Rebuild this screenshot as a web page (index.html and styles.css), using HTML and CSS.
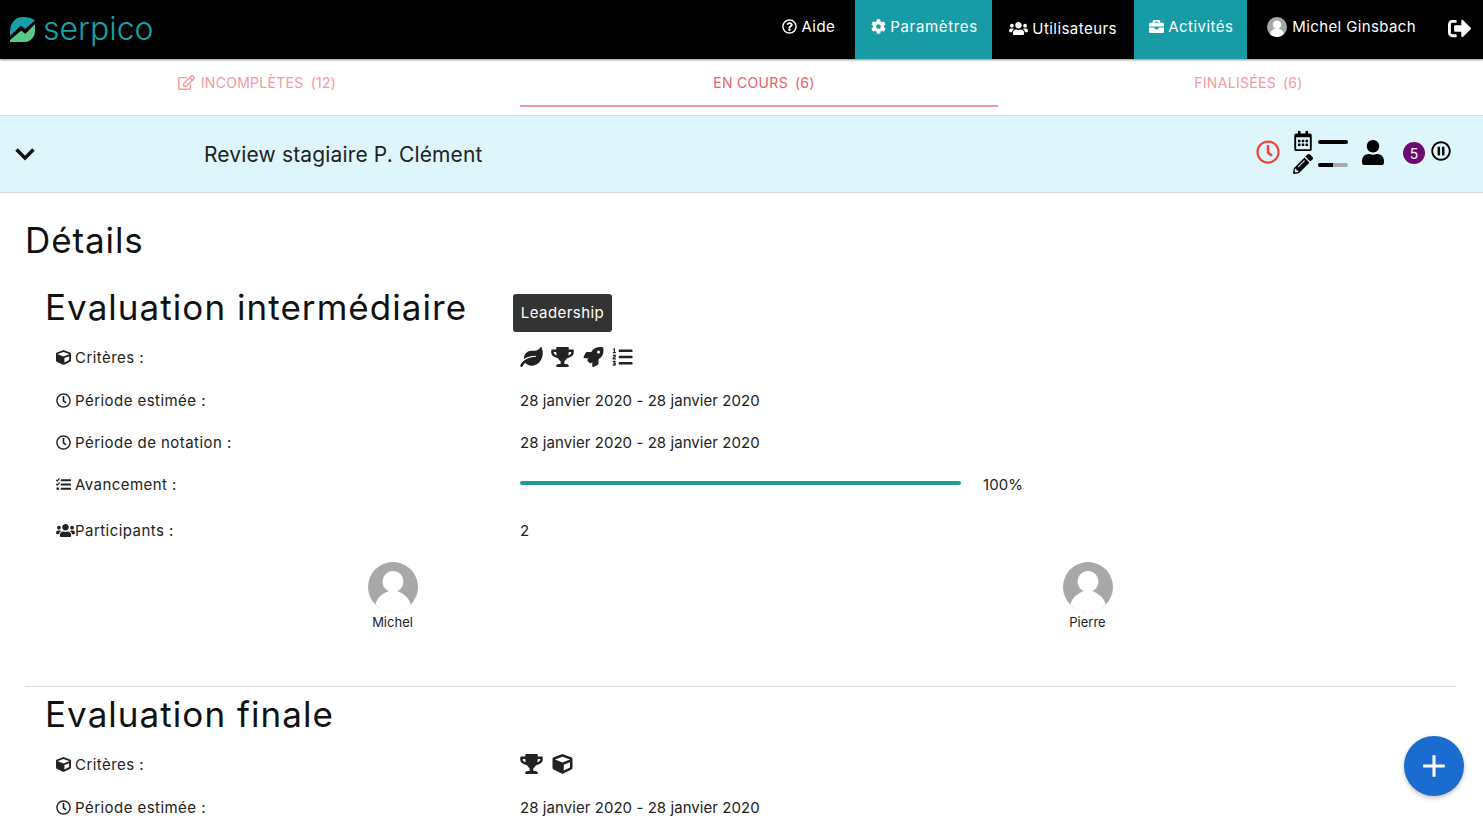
FILE: index.html
```html
<!DOCTYPE html>
<html lang="fr">
<head>
<meta charset="utf-8">
<title>Serpico</title>
<link rel="stylesheet" href="styles.css">
</head>
<body>
<svg class="sprite" xmlns="http://www.w3.org/2000/svg">
<defs>
<symbol id="i-user" viewBox="0 0 448 512"><path d="M224 256c70.7 0 128-57.3 128-128S294.7 0 224 0 96 57.3 96 128s57.3 128 128 128zm89.6 32h-16.7c-22.2 10.2-46.9 16-72.9 16s-50.6-5.8-72.9-16h-16.7C60.2 288 0 348.2 0 422.4V464c0 26.5 21.5 48 48 48h352c26.5 0 48-21.5 48-48v-41.6c0-74.2-60.2-134.4-134.4-134.4z"/></symbol>
<symbol id="i-users" viewBox="0 0 640 512"><path d="M96 224c35.3 0 64-28.7 64-64s-28.7-64-64-64-64 28.7-64 64 28.7 64 64 64zm448 0c35.3 0 64-28.7 64-64s-28.7-64-64-64-64 28.7-64 64 28.7 64 64 64zm32 32h-64c-17.6 0-33.5 7.1-45.1 18.6 40.3 22.1 68.9 62 75.1 109.4h66c17.7 0 32-14.3 32-32v-32c0-35.3-28.7-64-64-64zm-256 0c61.9 0 112-50.1 112-112S381.9 32 320 32 208 82.1 208 144s50.1 112 112 112zm76.8 32h-8.3c-20.8 10-43.9 16-68.5 16s-47.6-6-68.5-16h-8.3C179.6 288 128 339.6 128 403.2V432c0 26.5 21.5 48 48 48h288c26.5 0 48-21.5 48-48v-28.8c0-63.6-51.6-115.2-115.2-115.2zm-223.7-13.4C161.5 263.1 145.6 256 128 256H64c-35.3 0-64 28.7-64 64v32c0 17.7 14.3 32 32 32h65.9c6.3-47.4 34.9-87.3 75.2-109.4z"/></symbol>
<symbol id="i-trophy" viewBox="0 0 576 512"><path d="M552 64H448V24c0-13.3-10.7-24-24-24H152c-13.3 0-24 10.7-24 24v40H24C10.7 64 0 74.7 0 88v56c0 35.7 22.5 72.4 61.9 100.7 31.5 22.7 69.8 37.1 110 41.7C203.3 338.5 240 360 240 360v72h-48c-35.3 0-64 20.7-64 56v12c0 6.6 5.4 12 12 12h296c6.6 0 12-5.4 12-12v-12c0-35.3-28.7-56-64-56h-48v-72s36.7-21.5 68.1-73.6c40.3-4.6 78.6-19 110-41.7 39.3-28.3 61.9-65 61.9-100.7V88c0-13.3-10.7-24-24-24zM99.3 192.8C74.9 175.2 64 155.6 64 144v-16h64.2c1 32.6 5.8 61.2 12.8 86.2-15.1-5.2-29.2-12.4-41.7-21.4zM512 144c0 16.1-17.7 36.1-35.3 48.8-12.5 9-26.7 16.2-41.8 21.4 7-25 11.8-53.6 12.8-86.2H512v16z"/></symbol>
<symbol id="i-cube" viewBox="0 0 512 512"><path d="M239.1 6.3l-208 78c-18.7 7-31.1 25-31.1 45v225.1c0 18.2 10.3 34.8 26.5 42.9l208 104c13.5 6.8 29.4 6.8 42.9 0l208-104c16.3-8.1 26.5-24.8 26.5-42.9V129.3c0-20-12.4-37.9-31.1-44.9l-208-78C262 2.2 250 2.2 239.1 6.3zM256 68.4l192 72v1.1l-192 78-192-78v-1.1l192-72zm32 356V275.5l160-65v133.9l-160 80z"/></symbol>
<symbol id="i-clock" viewBox="0 0 512 512"><path d="M256 8C119 8 8 119 8 256s111 248 248 248 248-111 248-248S393 8 256 8zm0 448c-110.500 0-200-89.500-200-200S145.500 56 256 56s200 89.500 200 200-89.500 200-200 200zm61.800-104.400l-84.900-61.700c-3.100-2.300-4.900-5.900-4.900-9.700V116c0-6.600 5.400-12 12-12h32c6.600 0 12 5.400 12 12v141.700l66.800 48.600c5.400 3.900 6.500 11.400 2.600 16.800L334.600 349c-3.900 5.300-11.400 6.500-16.800 2.600z"/></symbol>
<symbol id="i-question" viewBox="0 0 512 512"><path d="M256 8C119.043 8 8 119.083 8 256c0 136.997 111.043 248 248 248s248-111.003 248-248C504 119.083 392.957 8 256 8zm0 448c-110.532 0-200-89.431-200-200 0-110.495 89.472-200 200-200 110.491 0 200 89.471 200 200 0 110.530-89.431 200-200 200zm107.244-255.200c0 67.052-72.421 68.084-72.421 92.863V300c0 6.627-5.373 12-12 12h-45.647c-6.627 0-12-5.373-12-12v-8.659c0-35.745 27.100-50.034 47.579-61.516 17.561-9.845 28.324-16.541 28.324-29.579 0-17.246-21.999-28.693-39.784-28.693-23.189 0-33.894 10.977-48.942 29.969-4.057 5.120-11.460 6.071-16.666 2.124l-27.824-21.098c-5.107-3.872-6.251-11.066-2.644-16.363C184.846 131.491 214.940 112 261.794 112c49.071 0 101.450 38.304 101.450 88.800zM298 368c0 23.159-18.841 42-42 42s-42-18.841-42-42 18.841-42 42-42 42 18.841 42 42z"/></symbol>
<symbol id="i-cog" viewBox="0 0 512 512"><path d="M487.400 315.700l-42.600-24.600c4.300-23.200 4.300-47 0-70.200l42.600-24.600c4.900-2.800 7.100-8.600 5.500-14-11.100-35.600-30-67.800-54.700-94.600-3.800-4.100-10-5.100-14.800-2.300L380.800 110c-17.900-15.400-38.500-27.300-60.800-35.100V25.800c0-5.600-3.900-10.500-9.400-11.700-36.700-8.200-74.300-7.800-109.200 0-5.500 1.200-9.400 6.100-9.400 11.700V75c-22.200 7.900-42.800 19.800-60.800 35.100L88.700 85.500c-4.900-2.800-11-1.900-14.800 2.300-24.700 26.700-43.600 58.900-54.700 94.600-1.700 5.400.6 11.200 5.500 14L67.300 221c-4.300 23.200-4.300 47 0 70.200l-42.600 24.600c-4.900 2.800-7.100 8.600-5.500 14 11.100 35.600 30 67.800 54.700 94.600 3.800 4.100 10 5.100 14.800 2.300l42.600-24.600c17.900 15.400 38.500 27.300 60.800 35.100v49.200c0 5.600 3.900 10.500 9.400 11.700 36.700 8.200 74.300 7.800 109.200 0 5.500-1.200 9.400-6.100 9.400-11.700v-49.200c22.200-7.900 42.800-19.800 60.800-35.100l42.600 24.600c4.900 2.800 11 1.900 14.800-2.300 24.700-26.700 43.600-58.900 54.700-94.600 1.500-5.500-.7-11.300-5.600-14.100zM256 336c-44.100 0-80-35.900-80-80s35.900-80 80-80 80 35.900 80 80-35.900 80-80 80z"/></symbol>
<symbol id="i-briefcase" viewBox="0 0 512 512"><path d="M320 336c0 8.840-7.160 16-16 16h-96c-8.840 0-16-7.160-16-16v-48H0v144c0 25.600 22.400 48 48 48h416c25.600 0 48-22.400 48-48V288H320v48zm144-208h-80V80c0-25.600-22.400-48-48-48H176c-25.600 0-48 22.400-48 48v48H48c-25.600 0-48 22.400-48 48v80h512v-80c0-25.600-22.400-48-48-48zm-144 0H192V96h128v32z"/></symbol>
<symbol id="i-signout" viewBox="0 0 512 512"><path d="M180 448H96c-53 0-96-43-96-96V160c0-53 43-96 96-96h84c6.600 0 12 5.400 12 12v40c0 6.600-5.400 12-12 12H96c-17.700 0-32 14.300-32 32v192c0 17.700 14.300 32 32 32h84c6.600 0 12 5.400 12 12v40c0 6.600-5.400 12-12 12z"/><path d="M505 273L337 441c-15 15-41 4.500-41-17v-96H160c-13.300 0-24-10.700-24-24v-96c0-13.300 10.700-24 24-24h136V88c0-21.400 26-32 41-17l168 168c9.300 9.400 9.300 24.600 0 34z"/></symbol>
<symbol id="i-pencil" viewBox="0 0 512 512"><path d="M497.900 142.100l-46.100 46.100c-4.700 4.700-12.300 4.700-17 0l-111-111c-4.700-4.700-4.700-12.300 0-17l46.100-46.100c18.700-18.700 49.100-18.700 67.900 0l60.100 60.100c18.800 18.700 18.800 49.100 0 67.900zM284.200 99.800L21.600 362.400.4 483.900c-2.900 16.400 11.400 30.600 27.800 27.800l121.500-21.300 262.600-262.600c4.700-4.700 4.700-12.300 0-17l-111-111c-4.800-4.700-12.400-4.700-17.100 0zM124.100 339.900c-5.500-5.500-5.500-14.300 0-19.800l154-154c5.500-5.500 14.300-5.500 19.800 0s5.500 14.300 0 19.800l-154 154c-5.500 5.500-14.300 5.500-19.800 0zM88 424h48v36.300l-64.500 11.300-31.100-31.100L51.700 376H88v48z"/></symbol>
<symbol id="i-calendar" viewBox="0 0 448 512"><path d="M148 288h-40c-6.600 0-12-5.400-12-12v-40c0-6.600 5.400-12 12-12h40c6.600 0 12 5.400 12 12v40c0 6.600-5.400 12-12 12zm108-12v-40c0-6.600-5.400-12-12-12h-40c-6.600 0-12 5.400-12 12v40c0 6.600 5.400 12 12 12h40c6.600 0 12-5.400 12-12zm96 0v-40c0-6.600-5.400-12-12-12h-40c-6.600 0-12 5.400-12 12v40c0 6.600 5.400 12 12 12h40c6.600 0 12-5.400 12-12zm-96 96v-40c0-6.600-5.400-12-12-12h-40c-6.600 0-12 5.400-12 12v40c0 6.600 5.400 12 12 12h40c6.600 0 12-5.400 12-12zm-96 0v-40c0-6.600-5.400-12-12-12h-40c-6.600 0-12 5.400-12 12v40c0 6.600 5.400 12 12 12h40c6.600 0 12-5.400 12-12zm192 0v-40c0-6.600-5.400-12-12-12h-40c-6.600 0-12 5.400-12 12v40c0 6.600 5.400 12 12 12h40c6.600 0 12-5.400 12-12zm96-260v352c0 26.500-21.500 48-48 48H48c-26.500 0-48-21.500-48-48V112c0-26.500 21.500-48 48-48h48V12c0-6.600 5.400-12 12-12h40c6.600 0 12 5.400 12 12v52h128V12c0-6.600 5.400-12 12-12h40c6.600 0 12 5.400 12 12v52h48c26.500 0 48 21.500 48 48zm-48 346V160H48v298c0 3.300 2.700 6 6 6h340c3.300 0 6-2.700 6-6z"/></symbol>
<symbol id="i-pause" viewBox="0 0 512 512"><path d="M256 8C119 8 8 119 8 256s111 248 248 248 248-111 248-248S393 8 256 8zm0 448c-110.500 0-200-89.500-200-200S145.500 56 256 56s200 89.500 200 200-89.500 200-200 200zm-40-312h-32c-8.800 0-16 7.200-16 16v192c0 8.800 7.200 16 16 16h32c8.800 0 16-7.200 16-16V160c0-8.800-7.200-16-16-16zm112 0h-32c-8.800 0-16 7.200-16 16v192c0 8.800 7.200 16 16 16h32c8.800 0 16-7.200 16-16V160c0-8.800-7.200-16-16-16z"/></symbol>
<symbol id="i-leaf" viewBox="0 0 576 512"><path d="M546.200 9.700c-5.600-12.500-21.600-13-28.300-1.200C486.900 62.400 431.400 96 368 96h-80C182 96 96 182 96 288c0 7 .8 13.700 1.500 20.500C161.300 262.800 253.400 224 384 224c8.800 0 16 7.200 16 16s-7.200 16-16 16C132.600 256 26 410.100 2.400 468c-6.600 16.300 1.200 34.900 17.500 41.600 16.400 6.800 35-1.100 41.800-17.300 1.500-3.600 20.900-47.900 71.900-90.600 32.400 43.900 94 85.800 174.900 77.200C465.500 467.500 576 326.700 576 154.300c0-50.200-10.800-102.200-29.800-144.600z"/></symbol>
<symbol id="i-rocket" viewBox="0 0 512 512"><path d="M505.120 19.094c-1.189-5.531-6.658-11-12.207-12.188C460.716 0 435.507 0 410.407 0 307.175 0 245.269 55.203 199.052 128H94.838c-16.348.016-35.557 11.875-42.887 26.484L2.516 253.297A28.400 28.400 0 0 0 0 264a24.009 24.009 0 0 0 24.006 24h103.810l-22.475 22.469c-11.365 11.361-12.996 32.258 0 45.250l50.904 50.906c11.156 11.188 32.156 13.156 45.277 0l22.475-22.469V488a24.009 24.009 0 0 0 24.006 24 28.559 28.559 0 0 0 10.707-2.516l98.728-49.391c14.629-7.297 26.508-26.500 26.508-42.859V312.797c72.598-46.313 128.035-108.406 128.035-211.094C512.075 76.500 512.075 51.297 505.120 19.094zM384.040 168A40 40 0 1 1 424.050 128 40.023 40.023 0 0 1 384.040 168z"/></symbol>
<symbol id="i-listol" viewBox="0 0 512 512"><path d="M61.770 401l17.500-20.150a19.920 19.920 0 0 0 5.070-14.190v-3.310C84.340 356 80.500 352 73 352H16a8 8 0 0 0-8 8v16a8 8 0 0 0 8 8h22.830a157.410 157.410 0 0 0-11 12.310l-5.610 7c-4 5.070-5.250 10.130-2.800 14.880l1.050 1.930c3 5.760 6.290 7.880 12.250 7.880h4.730c10.330 0 15.940 2.440 15.940 9.090 0 4.720-4.200 8.220-14.360 8.220a41.540 41.540 0 0 1-15.470-3.120c-6.490-3.880-11.740-3.500-15.600 3.120l-5.590 9.310c-3.720 6.130-3.190 11.720 2.630 15.940 7.710 4.690 20.380 9.440 37 9.440 34.160 0 48.500-22.750 48.500-44.120-.03-14.380-9.120-29.760-28.730-34.880zM496 224H176a16 16 0 0 0-16 16v32a16 16 0 0 0 16 16h320a16 16 0 0 0 16-16v-32a16 16 0 0 0-16-16zm0-160H176a16 16 0 0 0-16 16v32a16 16 0 0 0 16 16h320a16 16 0 0 0 16-16V80a16 16 0 0 0-16-16zm0 320H176a16 16 0 0 0-16 16v32a16 16 0 0 0 16 16h320a16 16 0 0 0 16-16v-32a16 16 0 0 0-16-16zM16 160h64a8 8 0 0 0 8-8v-16a8 8 0 0 0-8-8H64V40a8 8 0 0 0-8-8H32a8 8 0 0 0-7.140 4.420l-8 16A8 8 0 0 0 24 64h8v64H16a8 8 0 0 0-8 8v16a8 8 0 0 0 8 8zm-3.910 160H80a8 8 0 0 0 8-8v-16a8 8 0 0 0-8-8H41.320c3.290-10.290 48.340-18.680 48.340-56.440 0-29.060-25-39.560-44.470-39.560-21.360 0-33.800 10-40.460 18.750-4.370 5.590-3 10.840 2.800 15.370l8.580 6.880c5.610 4.560 11 2.470 16.120-2.440a13.440 13.440 0 0 1 9.460-3.840c3.330 0 9.280 1.560 9.280 8.750C51 248.190 0 257.310 0 304.590v4C0 316 5.080 320 12.090 320z"/></symbol>
<symbol id="i-tasks" viewBox="0 0 512 512"><path d="M176 80h320a16 16 0 0 1 16 16v32a16 16 0 0 1-16 16H176a16 16 0 0 1-16-16V96a16 16 0 0 1 16-16zm0 144h320a16 16 0 0 1 16 16v32a16 16 0 0 1-16 16H176a16 16 0 0 1-16-16v-32a16 16 0 0 1 16-16zm0 144h320a16 16 0 0 1 16 16v32a16 16 0 0 1-16 16H176a16 16 0 0 1-16-16v-32a16 16 0 0 1 16-16z"/><path d="M8 96l36 36 76-88M8 240l36 36 76-88" fill="none" stroke="currentColor" stroke-width="42"/><circle cx="60" cy="400" r="46"/></symbol>
<symbol id="i-edit" viewBox="0 0 576 512"><path d="M402.300 344.900l32-32c5-5 13.700-1.500 13.700 5.700V464c0 26.500-21.500 48-48 48H48c-26.500 0-48-21.500-48-48V112c0-26.500 21.500-48 48-48h273.500c7.100 0 10.700 8.600 5.700 13.700l-32 32c-1.500 1.500-3.500 2.300-5.700 2.300H48v352h352V350.500c0-2.100.8-4.100 2.300-5.600zm156.600-201.800L296.300 405.700l-90.400 10c-26.200 2.900-48.500-19.200-45.600-45.600l10-90.400L432.900 17.100c22.900-22.900 59.900-22.900 82.700 0l43.200 43.200c22.900 22.900 22.900 60 .1 82.800zM460.100 174L402 115.900 216.200 301.800l-7.300 65.300 65.300-7.300L460.100 174zm64.800-79.700l-43.200-43.200c-4.100-4.100-10.800-4.100-14.800 0L436 82l58.100 58.100 30.900-30.900c4-4.200 4-10.800-.1-14.900z"/></symbol>
<symbol id="i-avatar" viewBox="0 0 50 50"><circle cx="25" cy="25" r="25" fill="#a8a8a8"/><circle cx="25" cy="19.500" r="10.500" fill="#fff"/><path d="M7.300 42.700C9 36 14 31.500 21 29h8c7 2.500 12 7 13.700 13.700A25 25 0 0 1 7.300 42.700z" fill="#fff"/></symbol>
</defs>
</svg>

<header class="topbar">
  <div class="brand">
    <svg class="brand-mark" viewBox="0 0 25 25" aria-hidden="true">
      <path class="mark-teal" d="M0 14.500C0 6 5.500 0 13 0c5 0 9 1 12 3.500L15 12l-4-3.500L0 19z"/>
      <path class="mark-green" d="M0 25v-2l11.300-9.500 4 3.500L25 7v7c0 6-4.500 11-10.500 11z"/>
    </svg>
    <span class="brand-name">serpico</span>
  </div>
  <nav class="nav">
    <a class="nav-item nav-aide"><svg class="ico ico-nav"><use href="#i-question"/></svg>Aide</a>
    <a class="nav-item nav-on nav-param"><svg class="ico ico-nav"><use href="#i-cog"/></svg>Paramètres</a>
    <a class="nav-item nav-users"><svg class="ico ico-users"><use href="#i-users"/></svg>Utilisateurs</a>
    <a class="nav-item nav-on nav-act"><svg class="ico ico-nav"><use href="#i-briefcase"/></svg>Activités</a>
    <a class="nav-item nav-me"><svg class="ico ico-me"><use href="#i-avatar"/></svg>Michel Ginsbach</a>
    <a class="nav-out"><svg class="ico ico-out"><use href="#i-signout"/></svg></a>
  </nav>
</header>

<div class="tabs">
  <div class="tab tab-a"><svg class="ico ico-edit"><use href="#i-edit"/></svg>INCOMPLÈTES<span class="tab-n">(12)</span></div>
  <div class="tab tab-b tab-active">EN COURS<span class="tab-n">(6)</span></div>
  <div class="tab tab-c">FINALISÉES<span class="tab-n">(6)</span></div>
</div>

<div class="activity">
  <svg class="chevron" viewBox="0 0 22 14"><path d="M2.500 2.500L11 11l8.500-8.500"/></svg>
  <div class="activity-title">Review stagiaire P. Clément</div>
  <div class="activity-icons">
    <svg class="ico ico-late"><use href="#i-clock"/></svg>
    <div class="phases">
      <div class="phase"><svg class="ico ico-cal"><use href="#i-calendar"/></svg><span class="bar"></span></div>
      <div class="phase"><svg class="ico ico-pen"><use href="#i-pencil"/></svg><span class="bar bar-part"><span class="bar-fill"></span></span></div>
    </div>
    <svg class="ico ico-person"><use href="#i-user"/></svg>
    <span class="badge">5</span>
    <svg class="ico ico-pause"><use href="#i-pause"/></svg>
  </div>
</div>

<main class="details">
  <h1 class="details-title">Détails</h1>

  <section class="stage stage-first">
    <h2 class="stage-title">Evaluation intermédiaire</h2>
    <div class="tooltip">Leadership</div>
    <div class="row row-first">
      <div class="label"><svg class="ico ico-l"><use href="#i-cube"/></svg>Critères :</div>
      <div class="value crit">
        <svg class="ico ico-c"><use href="#i-leaf"/></svg>
        <svg class="ico ico-c"><use href="#i-trophy"/></svg>
        <svg class="ico ico-c"><use href="#i-rocket"/></svg>
        <svg class="ico ico-c ico-c-list"><use href="#i-listol"/></svg>
      </div>
    </div>
    <div class="row">
      <div class="label"><svg class="ico ico-l"><use href="#i-clock"/></svg>Période estimée :</div>
      <div class="value">28 janvier 2020 - 28 janvier 2020</div>
    </div>
    <div class="row">
      <div class="label"><svg class="ico ico-l"><use href="#i-clock"/></svg>Période de notation :</div>
      <div class="value">28 janvier 2020 - 28 janvier 2020</div>
    </div>
    <div class="row row-progress">
      <div class="label"><svg class="ico ico-l"><use href="#i-tasks"/></svg>Avancement :</div>
      <div class="value progress"><span class="track"></span><span>100%</span></div>
    </div>
    <div class="row">
      <div class="label"><svg class="ico ico-p"><use href="#i-users"/></svg>Participants :</div>
      <div class="value">2</div>
    </div>
    <div class="people">
      <div class="person"><svg class="avatar"><use href="#i-avatar"/></svg><span class="person-name">Michel</span></div>
      <div class="person"><svg class="avatar"><use href="#i-avatar"/></svg><span class="person-name">Pierre</span></div>
    </div>
  </section>

  <section class="stage stage-last">
    <h2 class="stage-title">Evaluation finale</h2>
    <div class="row row-first">
      <div class="label"><svg class="ico ico-l"><use href="#i-cube"/></svg>Critères :</div>
      <div class="value crit">
        <svg class="ico ico-c"><use href="#i-trophy"/></svg>
        <svg class="ico ico-c"><use href="#i-cube"/></svg>
      </div>
    </div>
    <div class="row">
      <div class="label"><svg class="ico ico-l"><use href="#i-clock"/></svg>Période estimée :</div>
      <div class="value">28 janvier 2020 - 28 janvier 2020</div>
    </div>
  </section>
</main>

<button class="fab" aria-label="Ajouter"><svg viewBox="0 0 24 24"><path d="M12 2v20M2 12h20"/></svg></button>
</body>
</html>
```

FILE: styles.css
```css
* { box-sizing: border-box; }
html, body { height: 100%; }
body {
  margin: 0;
  height: 818px;
  overflow: hidden;
  position: relative;
  background: #fff;
  color: #222;
  font-family: "Inter", "Noto Sans", sans-serif;
  font-size: 15px;
}
.sprite { display: none; }
.ico { display: block; fill: currentColor; flex: none; }

.topbar {
  height: 59px;
  background: #000;
  display: flex;
  align-items: stretch;
  justify-content: space-between;
  box-shadow: 0 1px 2px rgba(0,0,0,.45);
  position: relative;
}
.brand { display: flex; align-items: center; padding-left: 10px; gap: 8px; }
.brand-mark { width: 25px; height: 25px; }
.mark-teal { fill: #17a0aa; }
.mark-green { fill: #5acb85; }
.brand-name {
  color: #17a2aa;
  font-size: 32px;
  font-weight: 300;
  margin-top: -2px;
}
.nav { display: flex; align-items: stretch; color: #fff; }
.nav-item {
  display: flex;
  align-items: center;
  gap: 4px;
  white-space: nowrap;
  font-size: 15px;
  letter-spacing: .45px;
  padding-bottom: 6px;
}
.nav-aide { padding-right: 20px; }
.nav-on { background: #179ca6; color: #fff; padding: 0 15px 6px; }
.nav-param { width: 137px; padding-left: 16px; letter-spacing: .65px; }
.nav-act { width: 113px; }
.nav-users { width: 142px; padding: 0 0 2px 17px; }
.nav-me { margin-left: 20px; gap: 5px; letter-spacing: .38px; }
.nav-out { display: flex; align-items: center; margin-left: 32px; margin-right: 12px; padding-bottom: 2px; }
.ico-nav { width: 15px; height: 15px; }
.ico-users { width: 19px; height: 15px; }
.ico-me { width: 20px; height: 20px; }
.ico-out { width: 23px; height: 23px; }

.tabs {
  height: 57px;
  display: grid;
  grid-template-columns: 520px 478px 1fr;
  font-size: 14px;
  letter-spacing: .3px;
  color: #f59aa0;
  border-bottom: 1px solid #d9d9d9;
}
.tab { display: flex; justify-content: center; align-items: center; height: 48px; padding-bottom: 2px; }
.tab-n { margin-left: 7px; }
.tab-a { padding-right: 6px; }
.tab-b { padding-left: 10px; padding-bottom: 0; }
.tab-c { padding-left: 16px; }
.tab-active { color: #e8616a; border-bottom: 2px solid #f09aa0; }
.ico-edit { width: 17px; height: 15px; margin-right: 6px; }

.activity {
  height: 77px;
  background: #def6fb;
  border-bottom: 1px solid #cfd8da;
  display: flex;
  align-items: center;
}
.chevron {
  width: 22px; height: 14px;
  margin-left: 14px;
  fill: none;
  stroke: #111;
  stroke-width: 3.4;
}
.activity-title { margin-left: 168px; font-size: 21px; letter-spacing: .15px; color: #222; }
.activity-icons {
  margin-left: auto;
  margin-right: 32px;
  display: flex;
  align-items: center;
  color: #000;
}
.ico-late { width: 24px; height: 24px; color: #f0433a; margin-top: -5px; }
.phases { margin-left: 13px; display: flex; flex-direction: column; gap: 1px; margin-top: -2px; }
.phase { display: flex; align-items: center; gap: 5px; height: 22px; }
.ico-cal { width: 20px; height: 20px; padding: 0 1px; margin-top: -2px; }
.ico-pen { width: 20px; height: 20px; margin-top: -2px; }
.bar { width: 30px; height: 4px; border-radius: 2px; background: #000; display: block; }
.bar-part { background: #aaa; overflow: hidden; }
.bar-fill { display: block; width: 50%; height: 100%; background: #000; }
.ico-person { width: 22px; height: 25px; margin-left: 14px; margin-top: -3px; }
.badge {
  width: 22px; height: 22px;
  border-radius: 50%;
  background: #6f0a73;
  color: #fff;
  font-size: 14px;
  display: flex; align-items: center; justify-content: center;
  margin-left: 19px;
  margin-top: -2px;
}
.ico-pause { width: 20px; height: 20px; margin-left: 6px; margin-top: -7px; }

.details { padding: 0 27px 0 25px; }
.details-title {
  margin: 0;
  padding-top: 23px;
  font-size: 35px;
  letter-spacing: .9px;
  line-height: 48px;
  font-weight: 400;
  color: #111;
  height: 90px;
}
.stage { position: relative; }
.stage-title {
  margin: 0 0 5px 20px;
  font-size: 35px;
  letter-spacing: 1.05px;
  line-height: 48px;
  font-weight: 400;
  color: #111;
}
.stage-first { border-bottom: 1px solid #ddd; height: 404px; }
.stage-last { padding-top: 3px; }
.tooltip {
  position: absolute;
  left: 488px;
  top: 11px;
  width: 99px;
  height: 38px;
  background: #333;
  color: #fff;
  border-radius: 3px;
  font-size: 15px;
  letter-spacing: .45px;
  padding-bottom: 1px;
  display: flex; align-items: center; justify-content: center;
}
.row {
  display: grid;
  grid-template-columns: 464px 1fr;
  height: 42px;
  align-items: center;
  padding-left: 31px;
}
.row-first { height: 43px; }
.row-progress { margin-bottom: 4px; }
.label { display: flex; align-items: center; color: #222; gap: 4px; letter-spacing: .45px; }
.ico-l { width: 15px; height: 15px; }
.ico-p { width: 19px; height: 15px; margin-right: -4px; }
.value { color: #222; letter-spacing: .06px; }
.crit { display: flex; align-items: center; gap: 8px; margin-top: -2px; }
.ico-c { width: 23px; height: 20px; }
.ico-c-list { margin-left: -2px; }
.progress { display: flex; align-items: center; gap: 22px; }
.track { display: block; width: 441px; height: 4px; margin-top: -2px; background: #1f9c95; border-radius: 2px; }

.people {
  margin-top: 11px;
  margin-left: 20px;
  display: grid;
  grid-template-columns: 695px 695px;
}
.person { display: flex; flex-direction: column; align-items: center; }
.avatar { width: 50px; height: 50px; display: block; }
.person-name { font-size: 13px; margin-top: 2px; line-height: 17px; }

.fab {
  position: absolute;
  left: 1404px;
  top: 736px;
  width: 60px; height: 60px;
  border: 0; padding: 0;
  border-radius: 50%;
  background: #1a6cd0;
  box-shadow: 0 2px 4px rgba(0,0,0,.25);
  display: flex; align-items: center; justify-content: center;
}
.fab svg { width: 26px; height: 26px; fill: none; stroke: #fff; stroke-width: 2.8; }
```
